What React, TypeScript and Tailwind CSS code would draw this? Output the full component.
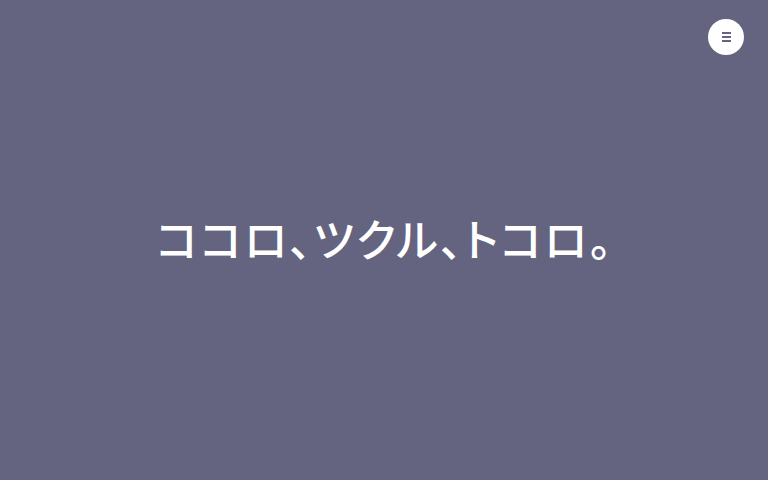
import React from 'react';

export default function App() {
  return (
    <div className="relative h-[480px] w-[768px] bg-[#646480] flex items-center justify-center">
      <button className="absolute right-[24px] top-[19px] flex h-[36px] w-[36px] items-center justify-center rounded-full bg-white">
        <span className="flex w-[9px] flex-col gap-[2px]">
          <span className="h-[2px] w-full bg-[#646480]" />
          <span className="h-[2px] w-full bg-[#646480]" />
          <span className="h-[2px] w-full bg-[#646480]" />
        </span>
      </button>
      <h1
        className="pl-[2px] text-[44px] font-medium leading-none tracking-[2.2px] text-white [font-feature-settings:'palt'] -mt-[4px]"
        style={{ fontFamily: '"Noto Sans CJK JP", sans-serif' }}
      >
        ココロ、ツクル、トコロ。
      </h1>
    </div>
  );
}
